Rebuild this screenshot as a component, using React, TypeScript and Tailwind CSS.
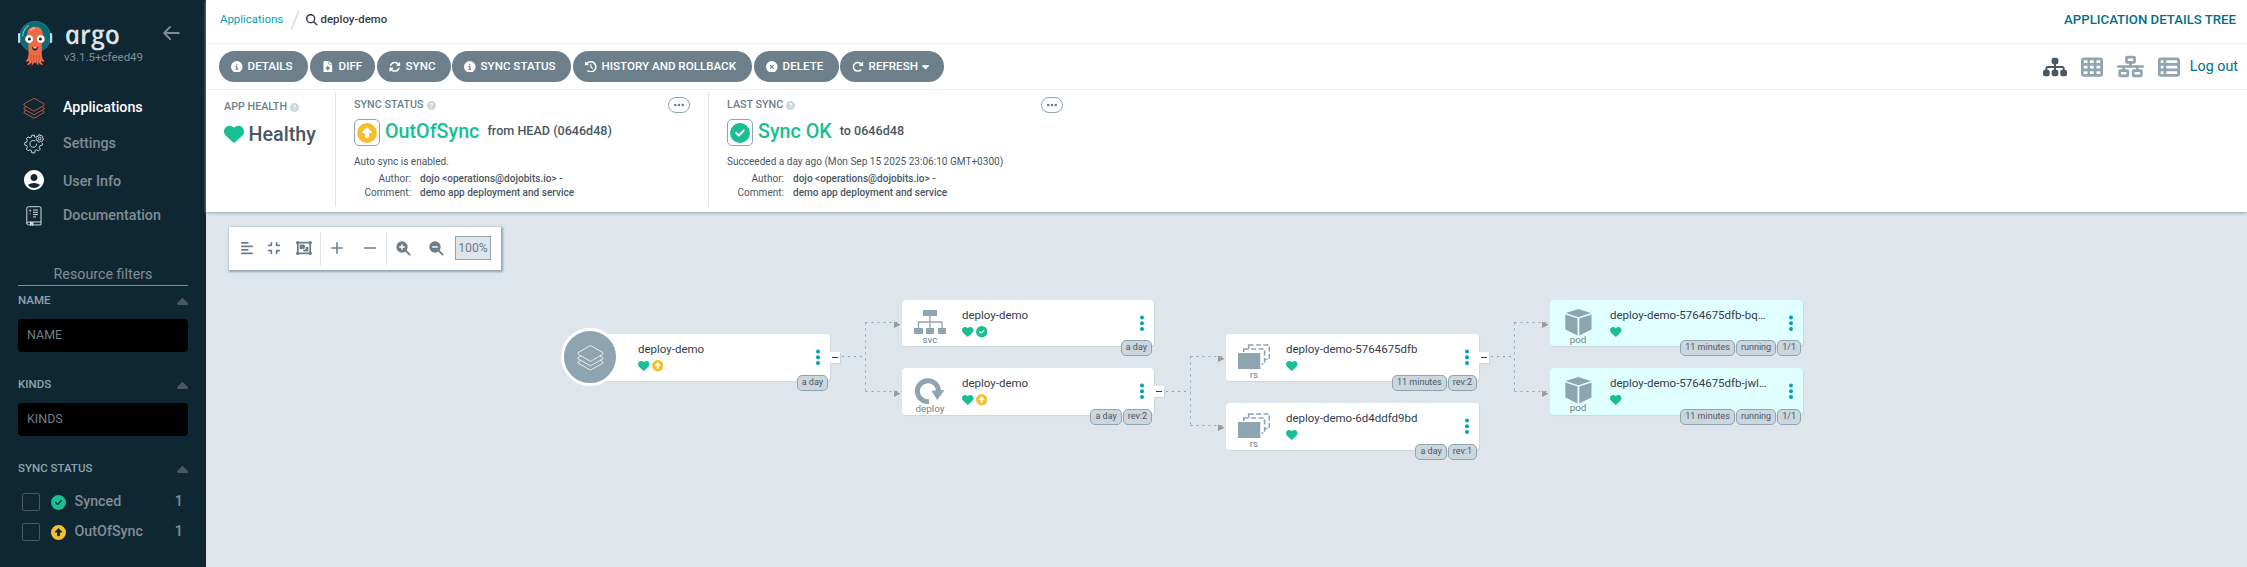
import React from "react";
import {
  FaAlignLeft, FaArrowRotateRight, FaArrowsRotate, FaCaretDown, FaCircleCheck, FaCircleInfo,
  FaCircleQuestion, FaCircleUp, FaCircleXmark, FaClockRotateLeft, FaCompress, FaEllipsis, FaFileMedical,
  FaHeart, FaMagnifyingGlass, FaNetworkWired, FaObjectGroup, FaSitemap, FaTableCells,
  FaTableList,
} from "react-icons/fa6";
import { MdAccountCircle } from "react-icons/md";

const ROBOTO = "font-[Roboto,sans-serif]";

function Octopus() {
  return (
    <svg width="36" height="47" viewBox="0 0 36 47">
      <circle cx="17.2" cy="16.7" r="15.8" fill="#0c6a75" />
      <circle cx="17.2" cy="16.7" r="15.2" fill="none" stroke="#1f7a84" strokeWidth=".9" />
      <path d="M4.6 16 Q5.5 8.5 10.5 5.8" stroke="#8fc3c8" strokeWidth="1.1" fill="none" strokeLinecap="round" />
      <rect x="0" y="13" width="2.2" height="10" rx="1" fill="#b8dbe6" />
      <rect x="32" y="13" width="2.2" height="10" rx="1" fill="#b8dbe6" />
      <path d="M9.3 14.5 Q9.3 6.8 17 6.8 Q24.8 6.8 24.8 14.5 Q24.8 20 23.8 24 V34 Q24 39.5 26.6 41 Q24.6 42.5 22.8 40.5 Q23.4 43.5 25.2 44.6 Q22.2 45.8 20.6 42 L20.4 45.6 Q18.4 45 18.3 42 L17.2 43.6 L16 42 Q15.8 45 13.8 45.6 L13.6 42 Q12 45.8 9 44.6 Q10.8 43.5 11.4 40.5 Q9.6 42.5 7.6 41 Q10.2 39.5 10.5 34 V24 Q9.3 20 9.3 14.5 Z" fill="#ee6b46" />
      <path d="M12.5 10 Q14 8 16.5 8.1" stroke="#fba586" strokeWidth="1.6" fill="none" strokeLinecap="round" />
      <path d="M13 34 V41 M15.6 35 V42 M18.6 35 V42 M21.4 34 V41" stroke="#c94f31" strokeWidth=".7" />
      <circle cx="11.2" cy="19" r="4.2" fill="#fff" stroke="#d4512f" strokeWidth=".5" />
      <circle cx="22.7" cy="19" r="4.2" fill="#fff" stroke="#d4512f" strokeWidth=".5" />
      <circle cx="11.4" cy="18.9" r="1.5" fill="#0d2430" />
      <circle cx="22.4" cy="18.9" r="1.5" fill="#0d2430" />
      <path d="M14 26.8 Q17 28.2 20 26.8 Q19.6 30.6 17 30.6 Q14.4 30.6 14 26.8Z" fill="#0d2430" />
      <rect x="15.4" y="27.2" width="3.2" height="1.2" fill="#fff" />
    </svg>
  );
}

function Layers({ color, size, sw }: { color: string; size: number; sw: number }) {
  return (
    <svg width={size} height={size} viewBox="0 0 24 24" fill="none" stroke={color} strokeWidth={sw} strokeLinejoin="round">
      <path d="M12 1.3 L23 7.6 V9 L12 15.5 L1 9 V7.6 Z" />
      <path d="M3.5 10.6 L1 12 V13.2 L12 19.4 L23 13.2 V12 L20.5 10.6" />
      <path d="M3.5 14.6 L1 15.9 V17 L12 23.2 L23 17 V15.9 L20.5 14.6" />
    </svg>
  );
}

function Gears() {
  return (
    <svg width="20" height="20" viewBox="0 0 20 20" fill="none" stroke="#dfe6ea" strokeWidth=".9" strokeLinejoin="round">
      <path d="M11.5 3 L10.6 3 L10.4 1.2 H7.8 L7.4 3.2 L5.9 3.9 L4.1 2.9 L2.3 4.7 L3.4 6.4 L2.8 8 L.8 8.6 V11.1 L2.8 11.6 L3.4 13.2 L2.3 15 L4.1 16.8 L5.9 15.8 L7.4 16.5 L7.9 18.9 H10.6 L11.1 16.5 L12.7 15.8 L14.5 16.9 L16.3 15.1 L15.2 13.3 L15.9 11.8 L18.4 11.1 V9.2" />
      <path d="M11.3 7.2 A3.4 3.4 0 1 0 12.6 9.6" />
      <path d="M14.8 .8 H16.2 L16.6 2 L17.9 1.6 L18.9 2.7 L18.4 3.8 L19.4 4.4 V5.7 L18.3 6.1 L18.4 7.3 L17.3 8 L16.4 7.3 L15.4 8.2 L14.2 7.8 L14 6.7 L12.8 6.7 L12.1 5.5 L12.8 4.6 L12.1 3.5 L12.9 2.2 L14.2 2.4 Z" />
      <circle cx="15.7" cy="4.6" r="1.4" />
    </svg>
  );
}

function DocBook() {
  return (
    <svg width="16" height="20" viewBox="0 0 16 20" fill="none" stroke="#cfd8dd" strokeWidth="1">
      <path d="M2.5 .7 H13.6 Q15 .7 15 2 V16 H3 Q.8 16 .8 17.6 V2.3 Q.8 .7 2.5 .7 Z M.8 17.4 Q.8 18.9 2.6 18.9 H15 V16" strokeLinejoin="round" />
      <path d="M4.5 16 V19.6 L5.7 18.6 L6.9 19.6 V16" fill="#cfd8dd" />
      <path d="M3.2 4.3 Q4.4 3.4 4.8 4.4 Q4.9 5 4 5.7 M4 7.5 V8.3 M7 4 H12 M7 6.3 H12 M7 8.6 H12 M7 10.9 H10" />
    </svg>
  );
}

function NavRow({ icon, label, active, h }: { icon: React.ReactNode; label: string; active?: boolean; h: string }) {
  return (
    <div className={`flex items-center ${h}`}>
      <div className="ml-[22px] flex w-6 justify-center">{icon}</div>
      <span className={`ml-[17px] text-[14.3px] font-medium ${active ? "text-white" : "text-[#818d94]"}`}>{label}</span>
    </div>
  );
}

function FilterHead({ label }: { label: string }) {
  return (
    <div className="flex h-4 items-center justify-between">
      <span className="text-[11.5px] font-medium text-[#8fa4b1]">{label}</span>
      <svg width="11" height="7" viewBox="0 0 11 7" fill="#495763"><path d="M5.5 0 Q6 0 6.4 .4 L10.7 4.9 Q11.4 7 9.8 7 H1.2 Q-.4 7 .3 4.9 L4.6 .4 Q5 0 5.5 0Z" /></svg>
    </div>
  );
}

function FilterInput({ label }: { label: string }) {
  return (
    <div className="flex h-[33px] items-center rounded-[4px] bg-black pl-[9px] text-[12.5px] text-[#6d7f8b]">{label}</div>
  );
}

function CheckRow({ icon, label }: { icon: React.ReactNode; label: string }) {
  return (
    <div className="flex h-[18px] items-center pl-1 pr-[5px]">
      <div className="size-[18px] rounded-[2px] border border-[#495763]" />
      <div className="ml-[11px]">{icon}</div>
      <span className="ml-[8.5px] grow text-[14.3px] font-medium text-[#818d94]">{label}</span>
      <span className="text-[14.3px] font-medium text-[#818d94]">1</span>
    </div>
  );
}

function Sidebar() {
  return (
    <aside className="flex w-[206px] shrink-0 flex-col bg-[#0f2733]">
      <div className="flex h-[71px] pl-[18px] pt-5">
        <Octopus />
        <div className="ml-[10px] flex w-[76px] flex-col">
          <span className="-mt-[2px] h-[32px] w-[56px] origin-center skew-x-[12deg] font-['Open_Sans',sans-serif] text-[26.5px] leading-[32px] font-semibold text-[#dfe3e3] italic">argo</span>
          <span className="text-[11.5px] leading-[15px] text-[#818d94]">v3.1.5+cfeed49</span>
        </div>
        <svg className="ml-[23px] mt-[6px]" width="17" height="14" viewBox="0 0 17 14" fill="none" stroke="#818d94" strokeWidth="1.8" strokeLinecap="round" strokeLinejoin="round"><path d="M7 1 L1.2 7 L7 13 M1.5 7 H15.8" /></svg>
      </div>
      <div className="flex flex-col pt-[19px]">
        <NavRow h="h-9" active icon={<Layers color="#d9603b" size={22} sw={0.9} />} label="Applications" />
        <NavRow h="h-9" icon={<Gears />} label="Settings" />
        <NavRow h="h-10" icon={<MdAccountCircle className="-mt-[5px]" size={24} color="#fff" />} label="User Info" />
        <NavRow h="h-7" icon={<DocBook />} label="Documentation" />
      </div>
      <div className="mx-[18px] mt-[34px] flex h-[22px] items-center justify-center border-b border-[#818d94] text-[14.3px] text-[#818d94]">
        Resource filters
      </div>
      <div className="mx-[18px] flex flex-col">
        <div className="pt-[7px]"><FilterHead label="NAME" /></div>
        <div className="pt-[10px]"><FilterInput label="NAME" /></div>
        <div className="pt-[25px]"><FilterHead label="KINDS" /></div>
        <div className="pt-[10px]"><FilterInput label="KINDS" /></div>
        <div className="pt-[25px]"><FilterHead label="SYNC STATUS" /></div>
        <div className="flex flex-col gap-3 pt-4">
          <CheckRow icon={<FaCircleCheck size={15} color="#18be94" />} label="Synced" />
          <CheckRow icon={<FaCircleUp size={15} color="#f4c030" />} label="OutOfSync" />
        </div>
      </div>
    </aside>
  );
}

function Pill({ w, icon, label, caret }: { w: string; icon: React.ReactNode; label: string; caret?: boolean }) {
  return (
    <div className={`flex h-[31px] shrink-0 items-center rounded-full bg-[#6d7f8b] pl-3 text-[11.6px] font-medium whitespace-nowrap text-white ${w}`}>
      {icon}
      <span className="ml-[5px]">{label}</span>
      {caret && <FaCaretDown className="ml-[2px]" size={11} />}
    </div>
  );
}

function Label({ text }: { text: string }) {
  return (
    <div className="flex items-center gap-[3px] text-[10.75px] leading-[14px] font-medium text-[#6d7f8b]">
      {text}
      <FaCircleQuestion size={9} color="#ccd6dd" />
    </div>
  );
}

function SyncPanel(p: { w: string; title: string; icon: React.ReactNode; status: string; rev: string; line: string }) {
  return (
    <div className={`flex flex-col pl-[18px] ${p.w}`}>
      <div className="flex h-4 items-center justify-between">
        <Label text={p.title} />
        <div className="mr-[18px] flex h-4 w-[22px] items-center justify-center rounded-full border border-[#8fa4b1] text-[#6d7f8b]">
          <FaEllipsis size={12} />
        </div>
      </div>
      <div className="mt-[6px] flex h-[27px] items-center">
        <div className="flex h-[27px] w-[26px] items-center justify-center rounded-[5px] border border-[#8fa4b1]">{p.icon}</div>
        <span className="-mt-[2px] ml-[5px] text-[19.7px] font-medium text-[#18be94]">{p.status}</span>
        <span className="-mt-[2px] ml-2 text-[12.6px] font-medium text-[#495763]">{p.rev}</span>
      </div>
      <div className="mt-2 text-[10.05px] leading-4 text-[#495763]">{p.line}</div>
      <div className="mt-[2px] grid grid-cols-[57px_auto] gap-x-[9px] text-[10.05px] leading-[14px] text-[#495763]">
        <span className="text-right">Author:</span>
        <span className="font-medium">dojo &lt;operations@dojobits.io&gt; -</span>
        <span className="text-right">Comment:</span>
        <span className="font-medium">demo app deployment and service</span>
      </div>
    </div>
  );
}

function Zoom({ plus }: { plus?: boolean }) {
  return (
    <svg width="15" height="15" viewBox="0 0 15 15">
      <path d="M9 9 L13.6 13.6" stroke="#6d7f8b" strokeWidth="1.8" strokeLinecap="round" />
      <circle cx="6" cy="6" r="5.7" fill="#6d7f8b" />
      <path d={plus ? "M3.2 6 H8.8 M6 3.2 V8.8" : "M3.2 6 H8.8"} stroke="#fff" strokeWidth="1.4" />
    </svg>
  );
}

function Sign({ plus }: { plus?: boolean }) {
  return (
    <svg width="12" height="12" viewBox="0 0 12 12" className="-mt-[1px]">
      <path d={plus ? "M.8 6 H11.2 M6 .8 V11.2" : "M.3 6 H11.7"} stroke="#6d7f8b" strokeWidth="1.6" strokeLinecap="round" />
    </svg>
  );
}

function Cell({ w, children }: { w: string; children: React.ReactNode }) {
  return <div className={`flex shrink-0 justify-center ${w}`}>{children}</div>;
}

function TreeToolbar() {
  return (
    <div className="ml-[23px] mt-[15px] flex h-[43px] w-[272px] items-center bg-white text-[#6d7f8b] shadow-[1px_1px_2px_1px_#8fa4b1]">
      <Cell w="ml-[11px] w-[14px]"><FaAlignLeft size={14} className="-mt-[1px]" /></Cell>
      <Cell w="ml-[13px] w-[14px]"><FaCompress size={14} className="-mt-[1px]" /></Cell>
      <Cell w="ml-[14px] w-[17px]"><FaObjectGroup size={16} className="-mt-[1px]" /></Cell>
      <div className="ml-[8px] h-[34px] w-px bg-[#dee6eb]" />
      <Cell w="ml-[9px] w-[14px]"><Sign plus /></Cell>
      <Cell w="ml-[19px] w-[14px]"><Sign /></Cell>
      <div className="ml-[9px] h-[34px] w-px bg-[#dee6eb]" />
      <Cell w="ml-[9px] w-[15px]"><Zoom plus /></Cell>
      <Cell w="ml-[18px] w-[15px]"><Zoom /></Cell>
      <div className="ml-[11px] -mt-px flex h-6 w-9 items-center justify-center border border-[#8fa4b1] bg-[#dee6eb] text-[12.3px]">100%</div>
    </div>
  );
}

function SvcIcon() {
  return (
    <svg width="32" height="24" viewBox="0 0 32 24" fill="#8fa4b1">
      <rect x="9" y="0" width="14" height="6" /><rect x="0" y="18" width="9" height="6" /><rect x="12" y="18" width="8" height="6" /><rect x="24" y="18" width="8" height="6" />
      <path d="M16 6 V18 M4.5 18 V12 H28 V18" fill="none" stroke="#8fa4b1" strokeWidth="1.3" />
    </svg>
  );
}

function DeployIcon() {
  return (
    <svg width="30" height="26" viewBox="0 0 30 26">
      <path d="M14 23.6 A10.5 10.5 0 1 1 23.4 13.5" fill="none" stroke="#8fa4b1" strokeWidth="5" />
      <path d="M16.5 12.8 L29.5 12 L22.2 22 Z" fill="#8fa4b1" />
    </svg>
  );
}

function RsIcon() {
  return (
    <svg width="32" height="26" viewBox="0 0 32 26">
      <rect x="10.7" y="1" width="20.6" height="14.5" fill="none" stroke="#8fa4b1" strokeWidth="1.6" strokeDasharray="5 2.4" />
      <rect x="5.8" y="5" width="20.8" height="15" fill="#fff" stroke="#8fa4b1" strokeWidth="1.6" strokeDasharray="5 2.4" />
      <rect x="-1" y="8" width="24.5" height="18" fill="#fff" />
      <rect x="0" y="9" width="22.3" height="16" fill="#8fa4b1" />
    </svg>
  );
}

function PodIcon() {
  return (
    <svg width="27" height="27" viewBox="0 0 27 27" fill="#8fa4b1">
      <path d="M13.3 0 L26 4 L13.3 8.2 L.6 4 Z" /><path d="M.3 5.6 L12.5 9.6 V26.4 L.3 20.5 Z" /><path d="M26.5 5.6 L14.3 9.6 V26.4 L26.5 20.5 Z" />
    </svg>
  );
}

type Kind = "app" | "svc" | "deploy" | "rs" | "pod";
type NodeData = { x: number; y: number; w: number; h: number; kind: Kind; title: string; sync?: "ok" | "out"; tags: string[]; toggle?: boolean };

const NODES: NodeData[] = [
  { x: 384, y: 121, w: 240, h: 47, kind: "app", title: "deploy-demo", sync: "out", tags: ["a day"], toggle: true },
  { x: 696, y: 87, w: 252, h: 46, kind: "svc", title: "deploy-demo", sync: "ok", tags: ["a day"] },
  { x: 696, y: 155, w: 252, h: 47, kind: "deploy", title: "deploy-demo", sync: "out", tags: ["a day", "rev:2"], toggle: true },
  { x: 1020, y: 121, w: 253, h: 47, kind: "rs", title: "deploy-demo-5764675dfb", tags: ["11 minutes", "rev:2"], toggle: true },
  { x: 1020, y: 190, w: 253, h: 47, kind: "rs", title: "deploy-demo-6d4ddfd9bd", tags: ["a day", "rev:1"] },
  { x: 1344, y: 87, w: 253, h: 46, kind: "pod", title: "deploy-demo-5764675dfb-bq…", tags: ["11 minutes", "running", "1/1"] },
  { x: 1344, y: 155, w: 253, h: 47, kind: "pod", title: "deploy-demo-5764675dfb-jwl…", tags: ["11 minutes", "running", "1/1"] },
];

const KIND_ICON: Record<Kind, React.ReactNode> = {
  app: null,
  svc: <div className="flex h-[33px] items-start pt-[10px]"><SvcIcon /></div>,
  deploy: <div className="flex h-[34px] items-start pt-[10px]"><DeployIcon /></div>,
  rs: <div className="flex h-[34px] items-start pt-[10px]"><RsIcon /></div>,
  pod: <div className="flex h-[33px] items-start pt-[9px]"><PodIcon /></div>,
};

function TreeNode({ n }: { n: NodeData }) {
  return (
    <div
      className={`absolute flex rounded-[4px] shadow-[1px_1px_1px_#ccd6dd] ${n.kind === "pod" ? "bg-[#e0ffff]" : "bg-white"}`}
      style={{ left: n.x, top: n.y, width: n.w, height: n.h }}
    >
      {n.kind === "app" ? (
        <div className="w-12 shrink-0">
          <div className="absolute -top-[6px] -left-[29px] flex size-[58px] items-center justify-center rounded-full border-[3px] border-white bg-[#8fa4b1]">
            <Layers color="#fff" size={27} sw={0.7} />
          </div>
        </div>
      ) : (
        <div className="flex w-[60px] shrink-0 flex-col items-center pr-[4px]">
          {KIND_ICON[n.kind]}
          <span className="text-[9.9px] leading-[14px] text-[#6d7f8b]">{n.kind}</span>
        </div>
      )}
      <div className="flex flex-col">
        <span className="mt-[7px] text-[11.5px] leading-4 whitespace-nowrap text-[#363c4a]">{n.title}</span>
        <div className="mt-[3px] flex gap-[2px]">
          <FaHeart size={11.5} color="#18be94" />
          {n.sync === "ok" && <FaCircleCheck size={11.5} color="#18be94" />}
          {n.sync === "out" && <FaCircleUp size={11.5} color="#f4c030" />}
        </div>
      </div>
      <svg className="absolute top-[15px] right-[10px]" width="4" height="17" viewBox="0 0 4 17" fill="#00a2b3">
        <circle cx="2" cy="2.5" r="2" /><circle cx="2" cy="8.2" r="2" /><circle cx="2" cy="14" r="2" />
      </svg>
      <div className="absolute right-[2px] -bottom-[10px] flex gap-px">
        {n.tags.map((t) => (
          <span key={t} className="flex h-4 items-center rounded-[5px] border border-[#8fa4b1] bg-[#ccd6dd] px-[4px] text-[9px] whitespace-nowrap text-[#495763]">{t}</span>
        ))}
      </div>
      {n.toggle && (
        <div className="absolute top-[18px] -right-[10px] flex h-[11px] w-[10px] items-center justify-center bg-white shadow-[1px_1px_1px_#ccd6dd]">
          <div className="h-px w-[6px] bg-[#363c4a]" />
        </div>
      )}
    </div>
  );
}

function Edges() {
  const groups = [
    { x0: 634, xm: 659.5, x1: 696, y0: 143.5, ys: [109.5, 178.5] },
    { x0: 958, xm: 984.5, x1: 1020, y0: 178.5, ys: [143.5, 212.5] },
    { x0: 1283, xm: 1308.5, x1: 1344, y0: 143.5, ys: [109.5, 178.5] },
  ];
  return (
    <svg className="absolute inset-0" width="2041" height="354">
      {groups.map((g) => (
        <g key={g.x0} stroke="#8fa4b1" strokeWidth="1" strokeDasharray="2 4" fill="none">
          <path d={`M${g.x0 + 2} ${g.y0} H${g.xm}`} />
          <path d={`M${g.xm} ${g.ys[0]} V${g.ys[1]}`} />
          {g.ys.map((y) => (
            <g key={y}>
              <path d={`M${g.xm} ${y} H${g.x1}`} />
              <path d={`M${g.x1 - 8} ${y - 1} L${g.x1 - 1.5} ${y + 2.3} L${g.x1 - 8} ${y + 5.5} Z`} fill="#999" stroke="none" />
            </g>
          ))}
        </g>
      ))}
    </svg>
  );
}

export default function App() {
  return (
    <div className={`flex h-[567px] w-[2247px] overflow-hidden bg-[#dee6eb] ${ROBOTO}`}>
      <Sidebar />
      <main className="flex min-w-0 grow flex-col">
        <header className="z-10 flex h-[212px] shrink-0 flex-col bg-white shadow-[0_1px_3px_#8fa4b1]">
          <div className="flex h-11 items-center justify-between border-b border-[#eef1f3] pr-[11px] pl-[14px] pb-[3px]">
            <div className="flex items-center text-[11.4px]">
              <span className="text-[#00a2b3]">Applications</span>
              <svg className="ml-[7px]" width="10" height="20" viewBox="0 0 10 20"><path d="M1 19.5 L9 .5" stroke="#ccd6dd" strokeWidth="1.2" /></svg>
              <FaMagnifyingGlass className="ml-[6px]" size={11.5} color="#363c4a" />
              <span className="ml-[3px] font-medium text-[#363c4a]">deploy-demo</span>
            </div>
            <span className="text-[13.2px] font-medium text-[#006f8a]">APPLICATION DETAILS TREE</span>
          </div>
          <div className="flex h-[46px] items-center border-b border-[#eef1f3] pl-[13px] pr-[9px]">
            <div className="flex grow items-center">
              <Pill w="w-[89px] mr-[2px]" icon={<FaCircleInfo size={11.6} />} label="DETAILS" />
              <Pill w="w-[65px] mr-[2px]" icon={<FaFileMedical size={11.6} />} label="DIFF" />
              <Pill w="w-[74px] mr-[1px]" icon={<FaArrowsRotate size={11.6} />} label="SYNC" />
              <Pill w="w-[119px] mr-[2px]" icon={<FaCircleInfo size={11.6} />} label="SYNC STATUS" />
              <Pill w="w-[179px] mr-[2px]" icon={<FaClockRotateLeft size={11.6} />} label="HISTORY AND ROLLBACK" />
              <Pill w="w-[85px] mr-[1px]" icon={<FaCircleXmark size={11.6} />} label="DELETE" />
              <Pill w="w-[104px]" icon={<FaArrowRotateRight size={11.6} />} label="REFRESH" caret />
            </div>
            <div className="flex items-center text-[#8fa4b1]">
              <FaSitemap size={24} color="#495763" />
              <FaTableCells className="ml-[14px]" size={22} />
              <FaNetworkWired className="ml-[14px]" size={27} />
              <FaTableList className="ml-[14px]" size={22} />
              <span className="ml-[10px] text-[14.3px] text-[#006f8a]">Log out</span>
            </div>
          </div>
          <div className="flex h-[122px] pt-[2px]">
            <div className="flex h-[114px] w-[130px] flex-col border-r border-[#dee6eb] pt-[8px] pl-[18px]">
              <Label text="APP HEALTH" />
              <div className="mt-[7px] flex items-center gap-[4.5px]">
                <FaHeart size={20} color="#18be94" />
                <span className="mt-[2px] text-[19.7px] leading-[24px] font-medium text-[#495763]">Healthy</span>
              </div>
            </div>
            <div className="flex h-[114px] border-r border-[#dee6eb] pt-[5px]">
              <SyncPanel w="w-[372px]" title="SYNC STATUS" icon={<FaCircleUp size={20} color="#f4c030" />} status="OutOfSync" rev="from HEAD (0646d48)" line="Auto sync is enabled." />
            </div>
            <div className="flex h-[114px] pt-[5px]">
              <SyncPanel w="w-[372px]" title="LAST SYNC" icon={<FaCircleCheck size={20} color="#18be94" />} status="Sync OK" rev="to 0646d48" line="Succeeded a day ago (Mon Sep 15 2025 23:06:10 GMT+0300)" />
            </div>
          </div>
        </header>
        <div className="relative flex grow flex-col items-start">
          <TreeToolbar />
          <div className="absolute inset-0 top-[1px]">
            <Edges />
            {NODES.map((n) => (
              <TreeNode key={`${n.x}-${n.y}`} n={n} />
            ))}
          </div>
        </div>
      </main>
    </div>
  );
}
